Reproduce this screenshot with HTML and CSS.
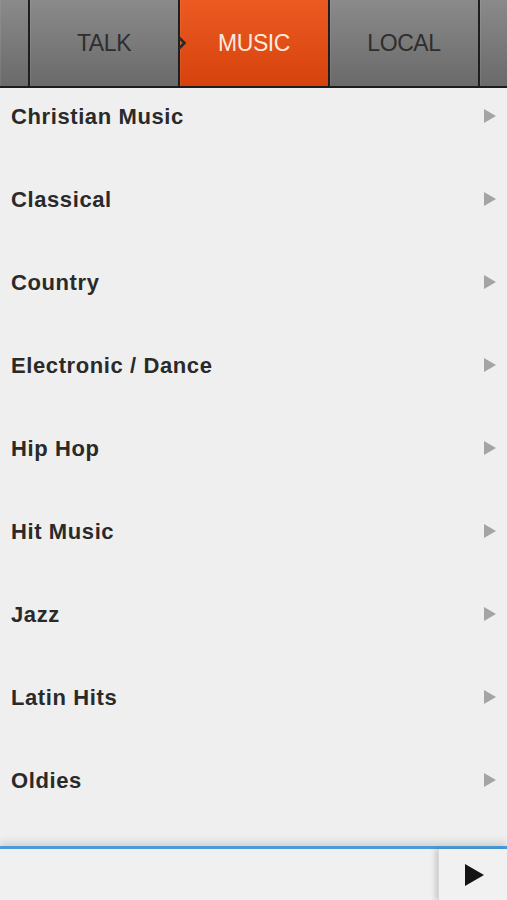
FILE: index.html
```html
<!DOCTYPE html>
<html>
<head>
<meta charset="utf-8">
<link rel="stylesheet" href="styles.css">
</head>
<body>
<div class="app">
  <div class="tabs">
    <div class="tab edge"></div>
    <div class="tab">TALK</div>
    <div class="tab active">MUSIC
      <svg class="marker" width="9" height="14" viewBox="0 0 9 14"><path d="M1 1.5 L6.5 7 L1 12.5" fill="none" stroke="#2a2a2a" stroke-width="2.6"/></svg>
    </div>
    <div class="tab">LOCAL</div>
    <div class="tab edge last"></div>
  </div>
  <div class="list">
    <div class="row"><span class="label">Christian Music</span><span class="arrow"></span></div>
    <div class="row"><span class="label">Classical</span><span class="arrow"></span></div>
    <div class="row"><span class="label">Country</span><span class="arrow"></span></div>
    <div class="row"><span class="label">Electronic / Dance</span><span class="arrow"></span></div>
    <div class="row"><span class="label">Hip Hop</span><span class="arrow"></span></div>
    <div class="row"><span class="label">Hit Music</span><span class="arrow"></span></div>
    <div class="row"><span class="label">Jazz</span><span class="arrow"></span></div>
    <div class="row"><span class="label">Latin Hits</span><span class="arrow"></span></div>
    <div class="row"><span class="label">Oldies</span><span class="arrow"></span></div>
  </div>
  <div class="player">
    <div class="track"></div>
    <div class="play">
      <svg width="21" height="24" viewBox="0 0 21 24"><path d="M1 1 L20 12 L1 23 Z" fill="#141414"/></svg>
    </div>
  </div>
</div>
</body>
</html>
```

FILE: styles.css
```css
* { box-sizing: border-box; }
html, body { margin: 0; padding: 0; }
body { background: #efefef; font-family: "Liberation Sans", Arial, sans-serif; }
.app { width: 507px; height: 900px; display: flex; flex-direction: column; overflow: hidden; }
.tabs {
  height: 88px;
  flex: none;
  display: flex;
  border-bottom: 2px solid #1c1c1c;
  background: linear-gradient(#8a8a8a, #6a6a6a);
}
.tab {
  width: 150px;
  flex: none;
  position: relative;
  border-left: 2px solid #1e1e1e;
  display: flex;
  align-items: center;
  justify-content: center;
  font-size: 23px;
  letter-spacing: -0.4px;
  color: #2e2e2e;
  padding-top: 1px;
  box-shadow: inset 1px 0 0 rgba(255,255,255,0.08);
}
.tab.edge { width: 28px; border-left: none; }
.tab.edge.last { flex: 1; width: auto; border-left: 2px solid #1e1e1e; }
.tab.active {
  background: linear-gradient(#ec5a22, #d6420d);
  color: #fbe9df;
}
.marker { position: absolute; left: -2px; top: 36px; }
.list { flex: 1; overflow: hidden; }
.row {
  height: 83px;
  display: flex;
  align-items: flex-start;
  justify-content: space-between;
  padding: 16px 11px 0 11px;
}
.label {
  font-size: 22px;
  font-weight: bold;
  letter-spacing: 0.6px;
  line-height: 26px;
  color: #2a2a2a;
}
.arrow {
  margin-top: 5px;
  width: 0; height: 0;
  border-top: 7px solid transparent;
  border-bottom: 7px solid transparent;
  border-left: 12px solid #a4a4a4;
}
.player {
  height: 54px;
  flex: none;
  display: flex;
  border-top: 3px solid #4a9ad8;
  background: #f0f0f0;
  position: relative;
  box-shadow: 0 -4px 7px rgba(0,0,0,0.12);
}
.track { flex: 1; }
.play {
  width: 69px;
  display: flex;
  align-items: center;
  justify-content: center;
  padding-left: 2px;
  border-left: 1px solid #d8d8d8;
  box-shadow: -3px 0 5px rgba(0,0,0,0.15);
  background: #f1f1f1;
}
```
